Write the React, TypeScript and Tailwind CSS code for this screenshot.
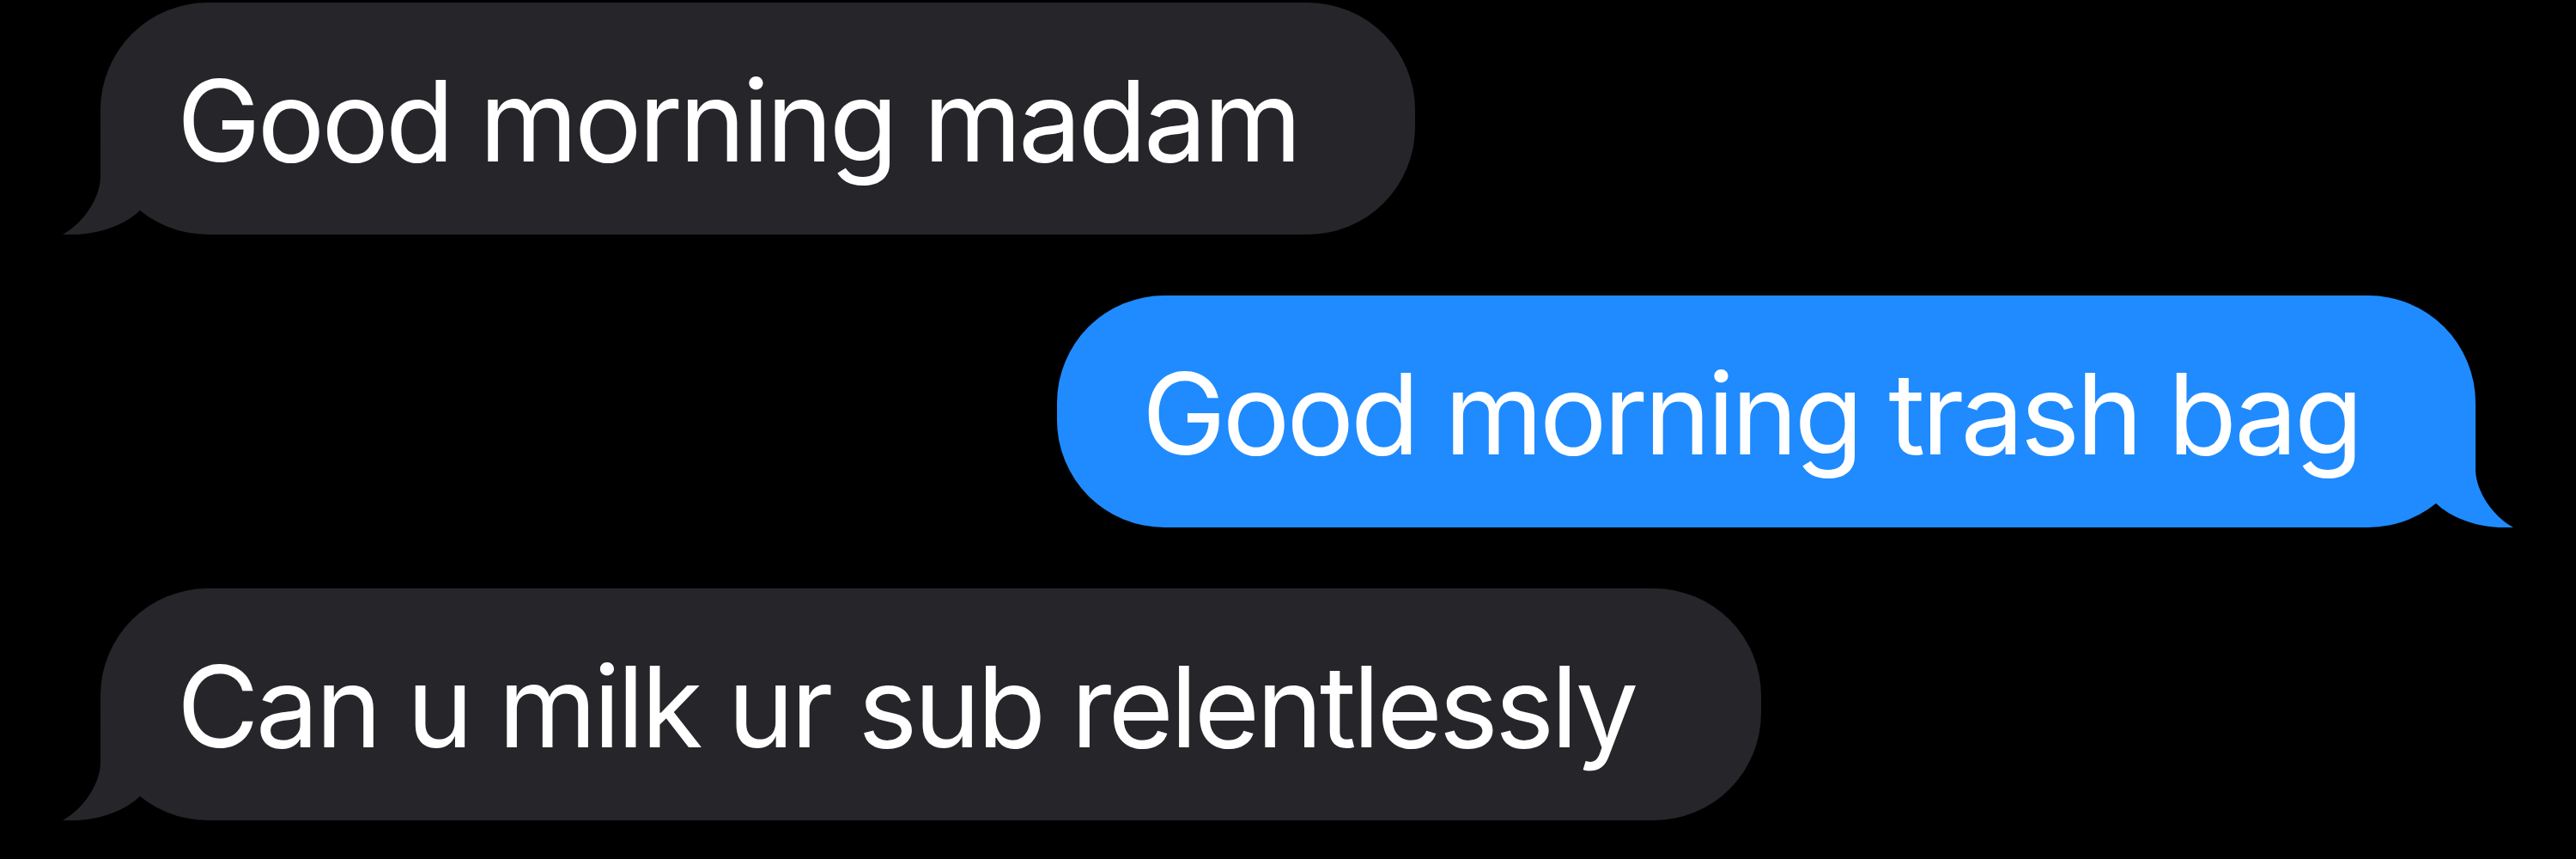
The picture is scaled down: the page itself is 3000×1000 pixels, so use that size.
const font = { fontFamily: 'Inter, "Noto Sans", sans-serif' };

type BubbleProps = {
  text: string;
  sent?: boolean;
  width: string;
};

// iMessage tail, drawn for the left side; mirrored for sent bubbles
function Tail({ color, flip }: { color: string; flip?: boolean }) {
  return (
    <svg
      className={flip ? 'absolute -right-[45px] bottom-0 -scale-x-100' : 'absolute -left-[45px] bottom-0'}
      width="100"
      height="130"
      viewBox="0 0 100 130"
    >
      <path d="M45 0 V64 C44 88 26 116 1 130 C35 132 70 122 91 102 V0 Z" fill={color} />
    </svg>
  );
}

function Bubble({ text, sent, width }: BubbleProps) {
  const color = sent ? '#1f8bfe' : '#262529';
  return (
    <div className={`relative h-[270px] ${width} ${sent ? 'self-end mr-[117px]' : 'ml-[117px]'}`}>
      <Tail color={color} flip={sent} />
      <div
        className={`relative flex h-full items-center rounded-[125px] pt-[5px] ${sent ? 'bg-[#1f8bfe] pl-[99px]' : 'bg-[#262529] pl-[89px]'}`}
      >
        <span className="whitespace-nowrap text-[131px] leading-none tracking-[-0.03em] text-white" style={font}>
          {text}
        </span>
      </div>
    </div>
  );
}

export default function App() {
  return (
    <div className="flex h-[1000px] w-[3000px] flex-col gap-[71px] overflow-hidden bg-black pt-[3px]">
      <Bubble text="Good morning madam" width="w-[1531px]" />
      <Bubble text="Good morning trash bag" width="w-[1652px]" sent />
      <Bubble text="Can u milk ur sub relentlessly" width="w-[1934px]" />
    </div>
  );
}
